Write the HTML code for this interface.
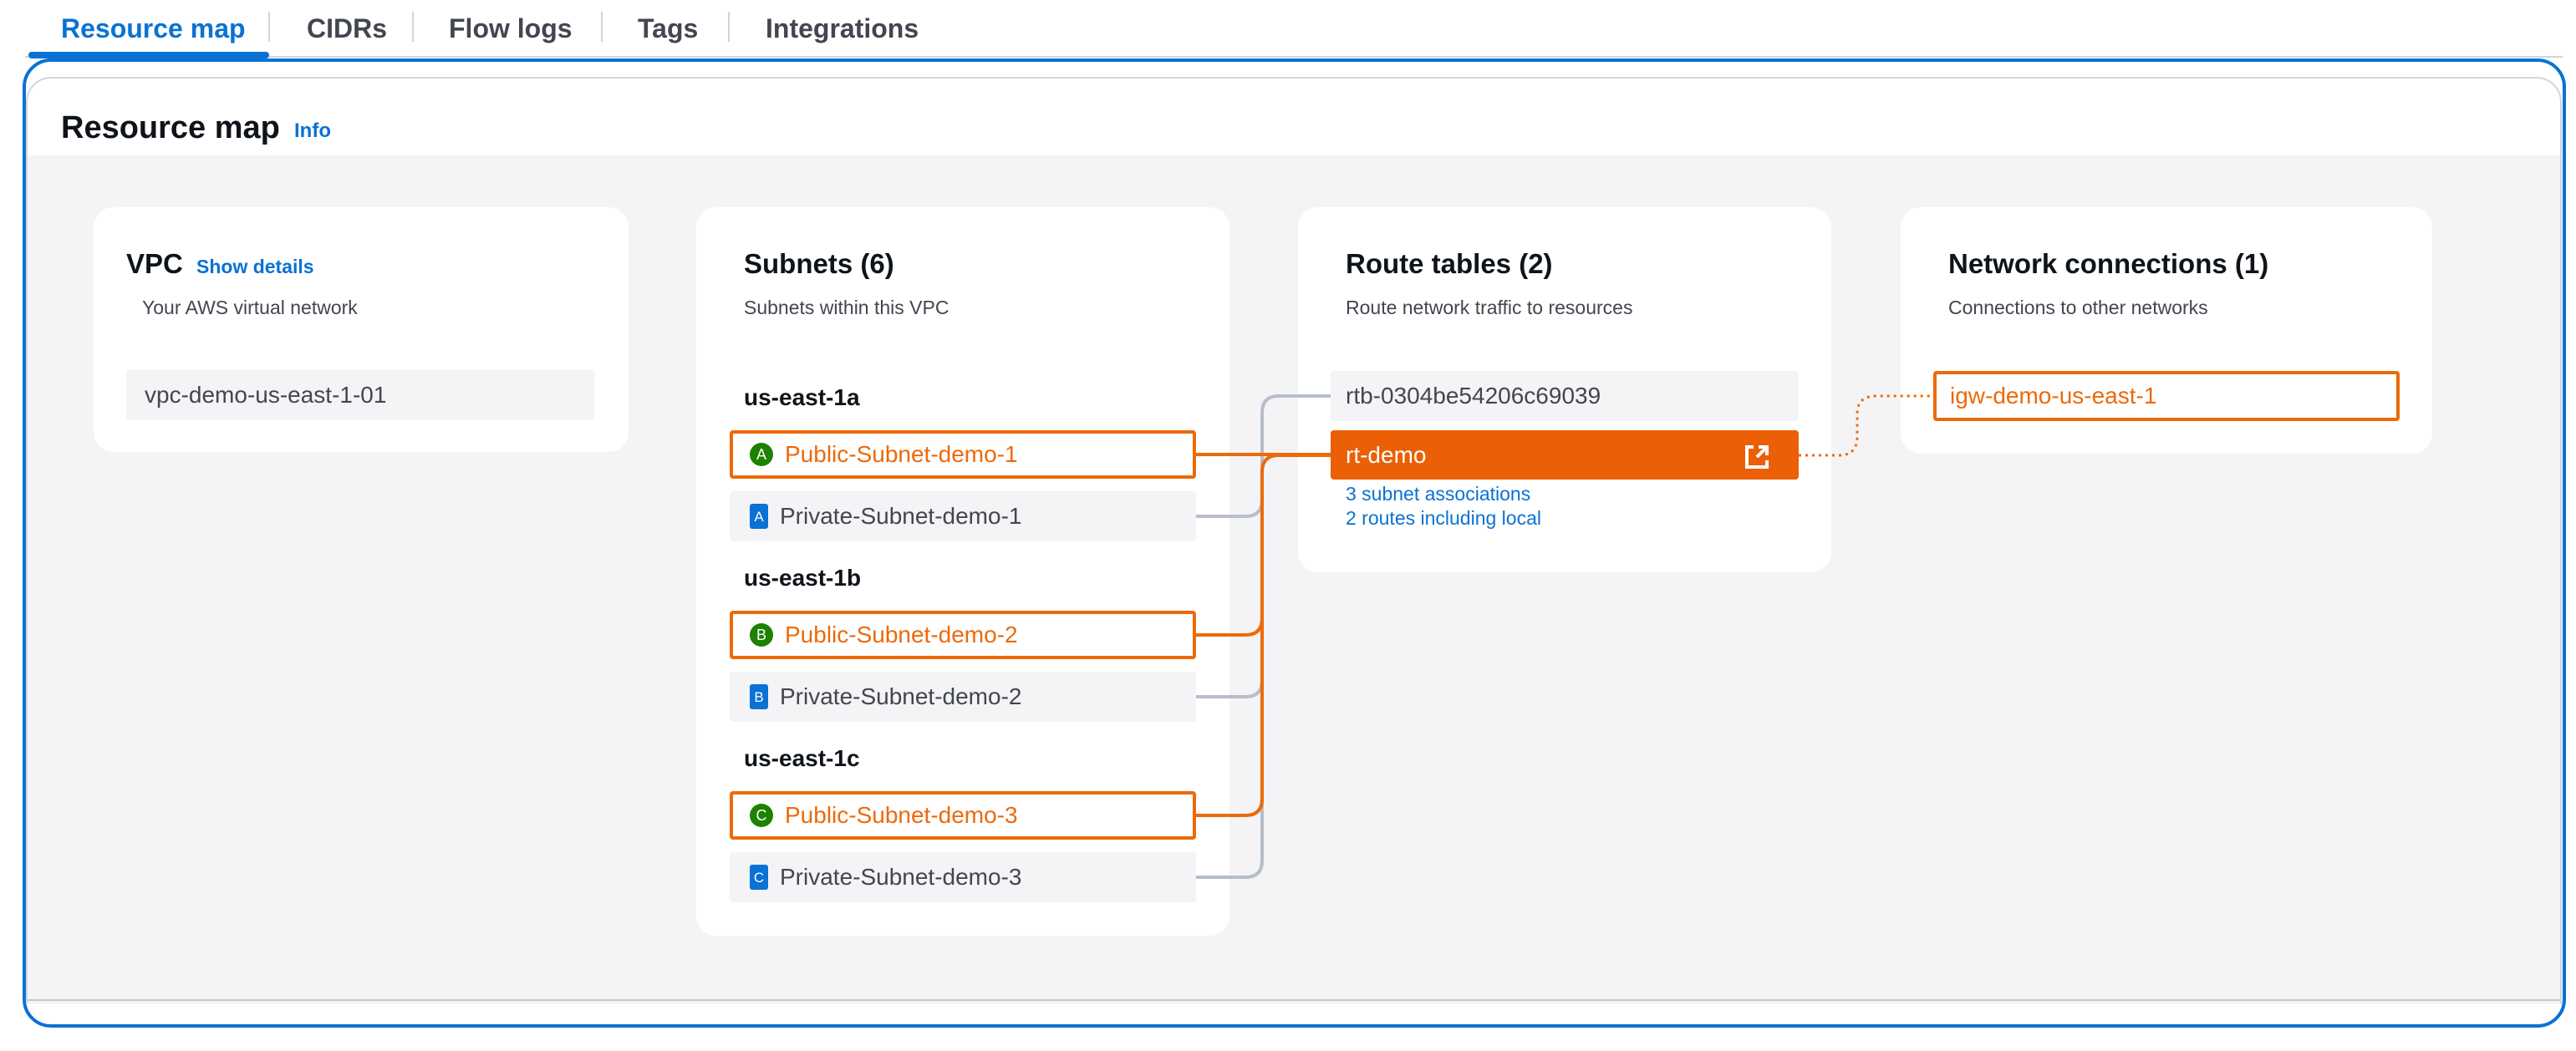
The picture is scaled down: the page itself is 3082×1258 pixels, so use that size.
<!DOCTYPE html>
<html><head><meta charset="utf-8"><style>
*{margin:0;padding:0;box-sizing:border-box}
body{width:3082px;height:1258px;background:#fff;font-family:"Liberation Sans",sans-serif;position:relative;overflow:hidden;color:#0f141a}
.a{position:absolute}
.tab{position:absolute;top:12px;font-size:32px;font-weight:bold;color:#424650;line-height:44px}
.sep{position:absolute;top:14px;width:2px;height:36px;background:#d1d5db}
.card{position:absolute;background:#fff;border-radius:24px}
.ttl{position:absolute;font-size:33px;font-weight:bold;color:#0f141a;white-space:nowrap}
.sub{position:absolute;font-size:23px;color:#424650;white-space:nowrap}
.box{position:absolute;background:#f4f4f6;border-radius:4px;font-size:28px;color:#424650;line-height:1;display:flex;align-items:center;padding-left:22px;white-space:nowrap}
.ob{position:absolute;border:4px solid #ec6a0a;border-radius:4px;font-size:28px;color:#ec6a0a;display:flex;align-items:center;padding-left:18px;background:#fff;white-space:nowrap}
.az{position:absolute;font-size:28px;font-weight:bold}
.g{width:28px;height:28px;border-radius:50%;background:#1d8102;color:#fff;font-size:18px;display:inline-flex;align-items:center;justify-content:center;margin-right:14px}
.b{width:22px;height:30px;border-radius:3px;background:#0972d3;color:#fff;font-size:17px;display:inline-flex;align-items:center;justify-content:center;margin-right:14px;margin-left:2px}
.lnk{position:absolute;color:#0972d3;font-size:23px;white-space:nowrap}
</style></head><body>
<div class="tab" style="left:73px;color:#0972d3">Resource map</div>
<div class="sep" style="left:321px"></div>
<div class="tab" style="left:367px">CIDRs</div>
<div class="sep" style="left:493px"></div>
<div class="tab" style="left:537px">Flow logs</div>
<div class="sep" style="left:719px"></div>
<div class="tab" style="left:763px">Tags</div>
<div class="sep" style="left:871px"></div>
<div class="tab" style="left:916px">Integrations</div>
<div class="a" style="left:30px;top:67px;width:3036px;height:2px;background:#d1d5db"></div>
<div class="a" style="left:34px;top:62px;width:288px;height:8px;border-radius:4px;background:#0972d3"></div>
<div class="a" style="left:27px;top:70px;width:3043px;height:1160px;border:4px solid #0972d3;border-radius:34px;background:#fff"></div>
<div class="a" style="left:31px;top:92px;width:3034px;height:1110px;border:2px solid #d1d5db;border-bottom:none;border-radius:30px 30px 0 0;background:#fff;overflow:hidden">
<div class="a" style="left:0;top:92px;width:100%;height:1018px;background:#f4f4f6"></div>
</div>
<div class="a" style="left:33px;top:1196px;width:3030px;height:2px;background:#c6c6cd"></div>
<div class="a" style="left:73px;top:132px;font-size:38px;font-weight:bold">Resource map</div>
<div class="a" style="left:352px;top:143px;font-size:24px;font-weight:bold;color:#0972d3">Info</div>

<div class="card" style="left:112px;top:248px;width:640px;height:293px"></div>
<div class="ttl" style="left:151px;top:297px">VPC</div>
<div class="lnk" style="left:235px;top:306px;font-weight:bold">Show details</div>
<div class="sub" style="left:170px;top:355px">Your AWS virtual network</div>
<div class="box" style="left:151px;top:442px;width:560px;height:61px;padding-left:22px">vpc-demo-us-east-1-01</div>

<div class="card" style="left:833px;top:248px;width:638px;height:872px"></div>
<div class="ttl" style="left:890px;top:297px">Subnets (6)</div>
<div class="sub" style="left:890px;top:355px">Subnets within this VPC</div>
<div class="az" style="left:890px;top:460px">us-east-1a</div>
<div class="ob" style="left:873px;top:515px;width:558px;height:58px;padding-left:20px"><span class="g">A</span>Public-Subnet-demo-1</div>
<div class="box" style="left:873px;top:588px;width:558px;height:60px"><span class="b">A</span>Private-Subnet-demo-1</div>
<div class="az" style="left:890px;top:676px">us-east-1b</div>
<div class="ob" style="left:873px;top:731px;width:558px;height:58px;padding-left:20px"><span class="g">B</span>Public-Subnet-demo-2</div>
<div class="box" style="left:873px;top:804px;width:558px;height:60px"><span class="b">B</span>Private-Subnet-demo-2</div>
<div class="az" style="left:890px;top:892px">us-east-1c</div>
<div class="ob" style="left:873px;top:947px;width:558px;height:58px;padding-left:20px"><span class="g">C</span>Public-Subnet-demo-3</div>
<div class="box" style="left:873px;top:1020px;width:558px;height:60px"><span class="b">C</span>Private-Subnet-demo-3</div>

<div class="card" style="left:1553px;top:248px;width:638px;height:437px"></div>
<div class="ttl" style="left:1610px;top:297px">Route tables (2)</div>
<div class="sub" style="left:1610px;top:355px">Route network traffic to resources</div>
<div class="box" style="left:1592px;top:444px;width:560px;height:60px;padding-left:18px">rtb-0304be54206c69039</div>
<div class="a" style="left:1592px;top:515px;width:560px;height:59px;background:#eb5f07;border-radius:4px;color:#fff;font-size:28px;display:flex;align-items:center;padding-left:18px">rt-demo</div>
<svg class="a" style="left:2086px;top:531px" width="32" height="32" viewBox="0 0 32 32" fill="none" stroke="#fff" stroke-width="4"><path d="M12 4H4v24h24v-8"/><path d="M16 16L28 4M18 4h10v10"/></svg>
<div class="lnk" style="left:1610px;top:578px">3 subnet associations</div>
<div class="lnk" style="left:1610px;top:607px">2 routes including local</div>

<div class="card" style="left:2274px;top:248px;width:636px;height:295px"></div>
<div class="ttl" style="left:2331px;top:297px">Network connections (1)</div>
<div class="sub" style="left:2331px;top:355px">Connections to other networks</div>
<div class="ob" style="left:2313px;top:444px;width:558px;height:60px;padding-left:16px">igw-demo-us-east-1</div>

<svg class="a" style="left:0;top:0" width="3082" height="1258" fill="none">
<g stroke="#b6bec9" stroke-width="4">
<path d="M1431 618H1490Q1510 618 1510 598V494Q1510 474 1530 474H1592"/>
<path d="M1431 834H1490Q1510 834 1510 814V600"/>
<path d="M1431 1050H1490Q1510 1050 1510 1030V800"/>
</g>
<g stroke="#ec6a0a" stroke-width="4">
<path d="M1431 544H1592"/>
<path d="M1431 760H1490Q1510 760 1510 740V565Q1510 545 1530 545H1592"/>
<path d="M1431 976H1490Q1510 976 1510 956V740"/>
<path d="M2152 545H2200Q2222 545 2222 523V496Q2222 474 2244 474H2311" stroke-width="3" stroke-dasharray="3 5"/>
</g>
</svg>
</body></html>
